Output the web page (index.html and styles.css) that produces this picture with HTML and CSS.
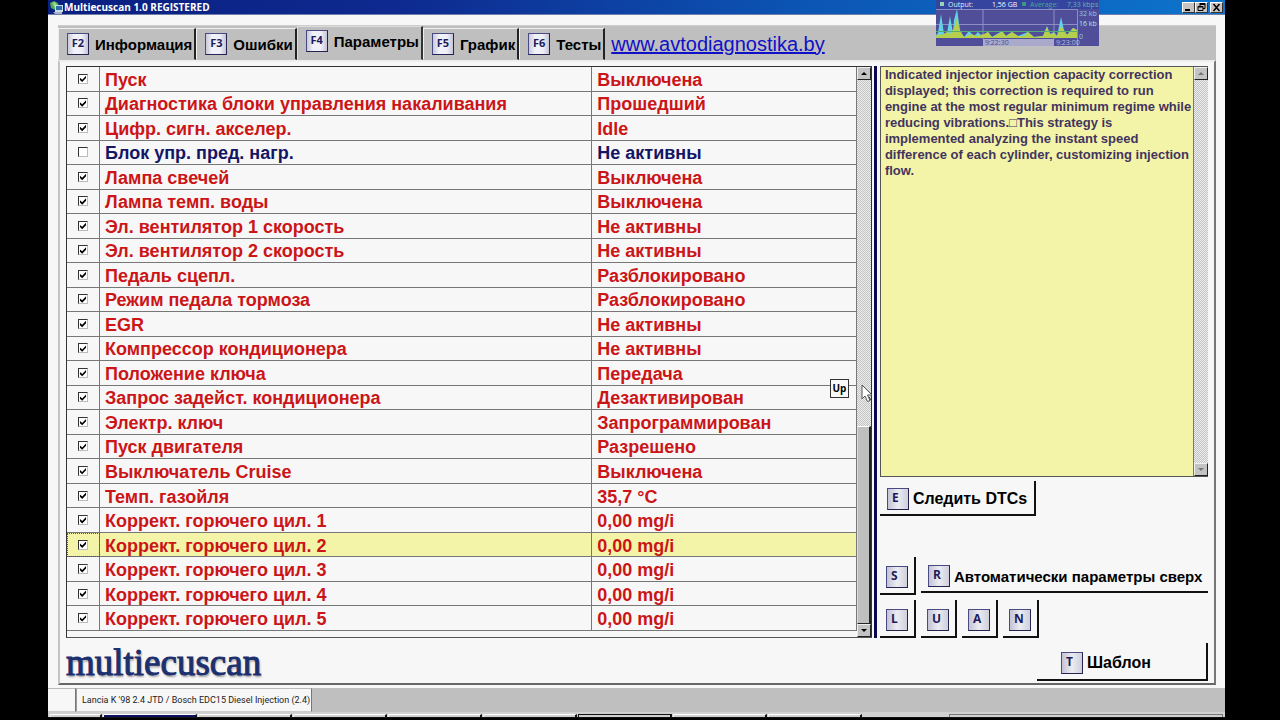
FILE: index.html
```html
<!DOCTYPE html>
<html lang="ru">
<head>
<meta charset="utf-8">
<title>Multiecuscan 1.0 REGISTERED</title>
<link rel="stylesheet" href="styles.css">
</head>
<body>
<div class="screen">
  <header class="titlebar">
    <svg class="app-icon" viewBox="0 0 13 13"><path d="M0 2l4-2 4 2 1 4-4 3-4-2z" fill="#4fa85c"/><path d="M2 2l3-1 2 3-2 3z" fill="#9bd67f"/><rect x="5" y="4" width="8" height="7" fill="#c9dbe8"/><rect x="6" y="5" width="6" height="4" fill="#2c6fae"/><path d="M3 11h9v2H5z" fill="#a8b4c4"/></svg>
    <h1 class="title">Multiecuscan 1.0 REGISTERED</h1>
    <div class="window-buttons">
      <button class="win-btn" aria-label="Minimize"><svg viewBox="0 0 11 9"><path d="M2 6h5v2H2z"/></svg></button>
      <button class="win-btn" aria-label="Restore"><svg viewBox="0 0 11 9"><path d="M4 .5h5v5H7M4 1.500h5M4 0v3M2 3.500h5v4H2zM2 4h5" fill="none" stroke="#000"/></svg></button>
      <button class="win-btn win-close" aria-label="Close"><svg viewBox="0 0 11 9"><path d="M2.500 1l6 7M8.500 1l-6 7" fill="none" stroke="#000" stroke-width="1.500"/></svg></button>
    </div>
  </header>

  <main class="workspace">
    <nav class="tabs">
      <button class="tab"><span class="key">F2</span>Информация</button>
      <button class="tab"><span class="key">F3</span>Ошибки</button>
      <button class="tab tab-active"><span class="key">F4</span>Параметры</button>
      <button class="tab"><span class="key">F5</span>График</button>
      <button class="tab"><span class="key">F6</span>Тесты</button>
      <a class="site-link" href="#">www.avtodiagnostika.by</a>
    </nav>

    <section class="panel">
      <div class="columns">
        <div class="list">
          <div class="list-body">
            <table class="params">
              <colgroup><col class="col-check"><col class="col-name"><col class="col-value"></colgroup>
              <tbody>
              <tr><td><input type="checkbox" id="p1" checked></td><td><label for="p1">Пуск</label></td><td>Выключена</td></tr>
              <tr><td><input type="checkbox" id="p2" checked></td><td><label for="p2">Диагностика блоки управления накаливания</label></td><td>Прошедший</td></tr>
              <tr><td><input type="checkbox" id="p3" checked></td><td><label for="p3">Цифр. сигн. акселер.</label></td><td>Idle</td></tr>
              <tr class="unchecked"><td><input type="checkbox" id="p4"></td><td><label for="p4">Блок упр. пред. нагр.</label></td><td>Не активны</td></tr>
              <tr><td><input type="checkbox" id="p5" checked></td><td><label for="p5">Лампа свечей</label></td><td>Выключена</td></tr>
              <tr><td><input type="checkbox" id="p6" checked></td><td><label for="p6">Лампа темп. воды</label></td><td>Выключена</td></tr>
              <tr><td><input type="checkbox" id="p7" checked></td><td><label for="p7">Эл. вентилятор 1 скорость</label></td><td>Не активны</td></tr>
              <tr><td><input type="checkbox" id="p8" checked></td><td><label for="p8">Эл. вентилятор 2 скорость</label></td><td>Не активны</td></tr>
              <tr><td><input type="checkbox" id="p9" checked></td><td><label for="p9">Педаль сцепл.</label></td><td>Разблокировано</td></tr>
              <tr><td><input type="checkbox" id="p10" checked></td><td><label for="p10">Режим педала тормоза</label></td><td>Разблокировано</td></tr>
              <tr><td><input type="checkbox" id="p11" checked></td><td><label for="p11">EGR</label></td><td>Не активны</td></tr>
              <tr><td><input type="checkbox" id="p12" checked></td><td><label for="p12">Компрессор кондиционера</label></td><td>Не активны</td></tr>
              <tr><td><input type="checkbox" id="p13" checked></td><td><label for="p13">Положение ключа</label></td><td>Передача</td></tr>
              <tr><td><input type="checkbox" id="p14" checked></td><td><label for="p14">Запрос задейст. кондиционера</label></td><td>Дезактивирован</td></tr>
              <tr><td><input type="checkbox" id="p15" checked></td><td><label for="p15">Электр. ключ</label></td><td>Запрограммирован</td></tr>
              <tr><td><input type="checkbox" id="p16" checked></td><td><label for="p16">Пуск двигателя</label></td><td>Разрешено</td></tr>
              <tr><td><input type="checkbox" id="p17" checked></td><td><label for="p17">Выключатель Cruise</label></td><td>Выключена</td></tr>
              <tr><td><input type="checkbox" id="p18" checked></td><td><label for="p18">Темп. газойля</label></td><td>35,7 °C</td></tr>
              <tr><td><input type="checkbox" id="p19" checked></td><td><label for="p19">Коррект. горючего цил. 1</label></td><td>0,00 mg/i</td></tr>
              <tr class="selected"><td><input type="checkbox" id="p20" checked></td><td><label for="p20">Коррект. горючего цил. 2</label></td><td>0,00 mg/i</td></tr>
              <tr><td><input type="checkbox" id="p21" checked></td><td><label for="p21">Коррект. горючего цил. 3</label></td><td>0,00 mg/i</td></tr>
              <tr><td><input type="checkbox" id="p22" checked></td><td><label for="p22">Коррект. горючего цил. 4</label></td><td>0,00 mg/i</td></tr>
              <tr><td><input type="checkbox" id="p23" checked></td><td><label for="p23">Коррект. горючего цил. 5</label></td><td>0,00 mg/i</td></tr>
              </tbody>
            </table>
          </div>
          <div class="scrollbar">
            <button class="arrow arrow-up" aria-label="Scroll up"></button>
            <div class="track"></div>
            <div class="thumb"></div>
            <button class="arrow arrow-down" aria-label="Scroll down"></button>
          </div>
          <div class="key-hint">Up</div>
          <svg class="pointer" viewBox="0 0 12 19"><path d="M1 1v14l3-3 2.500 5.500 2.500-1-2.500-5.500h4.500z" fill="#fff" stroke="#555"/><path d="M8 13l2 3" stroke="#333"/></svg>
        </div>

        <div class="splitter"></div>

        <aside class="side">
          <div class="info">
            <textarea class="info-text" aria-label="Description" readonly>Indicated injector injection capacity correction displayed; this correction is required to run engine at the most regular minimum regime while reducing vibrations.□This strategy is implemented analyzing the instant speed difference of each cylinder, customizing injection flow.</textarea>
            <div class="scrollbar scrollbar-off">
              <button class="arrow arrow-up" aria-label="Scroll up" disabled></button>
              <div class="track"></div>
              <button class="arrow arrow-down" aria-label="Scroll down" disabled></button>
            </div>
          </div>
          <button class="action action-dtc"><span class="key key-letter">E</span>Следить DTCs</button>
          <div class="action-row">
            <button class="action square"><span class="key key-letter">S</span></button>
            <button class="action action-auto"><span class="key key-letter">R</span>Автоматически параметры сверх</button>
          </div>
          <div class="action-row">
            <button class="action square"><span class="key key-letter">L</span></button>
            <button class="action square"><span class="key key-letter">U</span></button>
            <button class="action square"><span class="key key-letter">A</span></button>
            <button class="action square"><span class="key key-letter">N</span></button>
          </div>
        </aside>
      </div>
      <footer class="panel-footer">
        <div class="logo">multiecuscan</div>
        <button class="action action-template"><span class="key key-letter">T</span>Шаблон</button>
      </footer>
    </section>
  </main>

  <div class="statusbar">
    <div class="status-cell status-empty"></div>
    <div class="status-cell">Lancia K '98 2.4 JTD / Bosch EDC15 Diesel Injection (2.4)</div>
  </div>
  <div class="taskbar">
    <span class="task task-start"></span><span class="task task-current"></span><span class="task"></span><span class="task"></span><span class="task"></span><span class="task"></span><span class="task task-pressed"></span><span class="task"></span><span class="task"></span><span class="tray"></span>
  </div>

  <svg class="traffic" viewBox="0 0 163 46">
    <rect width="163" height="46" fill="#504d99"/>
    <rect width="163" height="9" fill="#35459f"/>
    <path d="M0 9.500h141M47 9v30M118 9v30M141.500 9v37M0 24.500h141" stroke="#8d8fc4" fill="none"/>
    <rect x="47" y="39" width="71" height="7" fill="#aaa9cb"/>
    <path d="M0 38V35L2 33L5 14L8 34L11 33L14 16L17 33L18 20L21 9L24 30L28 37L33 31L38 36L42 32L46 36L52 32L56 37L66 31L70 36L76 32L82 36L92 32L98 37L107 36L111 26L114 34L118 32L121 36L125 17L128 30L131 35L137 28L141 30V38Z" fill="#62d2e6"/>
    <path d="M0 38V36L4 34L6 35L11 32L14 34L18 28L21 18L24 31L28 37L36 34L40 36L48 34L52 32L56 37L64 33L66 31L70 36L76 32L82 36L88 36L92 32L98 37L107 36L111 27L114 34L118 33L121 36L125 26L129 32L131 35L137 28L141 30V38Z" fill="#b5d04c"/>
    <path d="M0 31.500h141" stroke="#55ad73"/>
    <rect x="4" y="2" width="4" height="4" fill="#95d5b5"/><rect x="86" y="2" width="4" height="4" fill="#3b9880"/>
    <g class="traffic-text">
      <text x="12" y="7" fill="#dfe9f5">Output:</text><text x="56" y="7" fill="#f3f5ff">1,56 GB</text>
      <text x="94" y="7" fill="#4da497">Average:</text><text x="131" y="7" fill="#67b4a8">7,33 kbps</text>
      <text x="143" y="16" fill="#8ec8e8">32 kb</text><text x="143" y="26" fill="#b2e4f3">16 kb</text><text x="143" y="39" fill="#8ec8e8">0</text>
      <text x="49" y="45" fill="#504d85">9:22:30</text><text x="120" y="45" fill="#b9b8dc">9:23:00</text>
    </g>
  </svg>
</div>
</body>
</html>
```
FILE: styles.css
```css
* { box-sizing: border-box; }

html, body { height: 100%; }

body {
  margin: 0;
  padding: 0 55px 2px 48px;
  background: #000;
  color: #000;
  font-family: "Liberation Sans", Arial, sans-serif;
}

button {
  margin: 0;
  padding: 0;
  border: 0;
  background: none;
  color: #000;
  font: inherit;
}

.screen {
  position: relative;
  display: flex;
  flex-direction: column;
  height: 100%;
  background: #f7f7f7;
}

.titlebar {
  display: flex;
  align-items: center;
  height: 15px;
  padding: 0 2px;
  background: linear-gradient(90deg, #0a1f80, #0e2a90 30%, #0c56b4 65%, #0d74cc);
  border-bottom: 1px solid #6f7fa8;
}

.app-icon { width: 13px; height: 13px; }

.title {
  flex: 1;
  margin: 0 0 0 1px;
  color: #fff;
  font: bold 10px/14px "Open Sans", sans-serif;
}

.window-buttons { display: flex; }

.win-btn {
  display: flex;
  width: 13px;
  height: 11px;
  background: #c6c3c0;
  border: 1px solid;
  border-color: #fff #333 #333 #fff;
}

.win-btn svg { width: 11px; height: 9px; }
.win-close { margin-left: 2px; }

.workspace {
  flex: 1;
  display: flex;
  flex-direction: column;
  min-height: 0;
  padding: 10px 9px 3px 10px;
}

.tabs {
  display: flex;
  align-items: flex-end;
  height: 35px;
  background: #bfbfbf;
  border-top: 1px solid #ccc;
}

.tab {
  display: flex;
  align-items: center;
  gap: 6px;
  height: 32px;
  padding: 0 2px 0 8px;
  border: 1px solid;
  border-color: #eee #222 #bfbfbf #eee;
  border-right-width: 2px;
  font-size: 15px;
  font-weight: bold;
  white-space: nowrap;
}

.tab-active {
  height: 34px;
  padding-bottom: 4px;
  border-color: #ddd #333 #bfbfbf #ddd;
}

.key {
  flex: none;
  display: block;
  width: 22px;
  height: 22px;
  border: 1px solid;
  border-color: #4b4b83 #25234f #25234f #4b4b83;
  background: linear-gradient(90deg, #c8c8da, #f2f2fa 30%, #efeff8 70%, #c4c4d6);
  color: #1d1b5c;
  font: bold 11px/18px "Open Sans", sans-serif;
  text-align: center;
}

.key-letter {
  padding-left: 4px;
  text-align: left;
  background: linear-gradient(90deg, #c3c3d6, #ececf3 50%, #cfcfdb);
}

.site-link {
  align-self: center;
  margin-left: 6px;
  padding-top: 2px;
  color: #1010c8;
  font-size: 20px;
}

.panel {
  flex: 1;
  display: flex;
  flex-direction: column;
  min-height: 0;
  padding: 4px 6px 0 6px;
  border: 2px solid;
  border-color: #fff #777 #666 #c4c4c4;
  border-top-color: #eee;
}

.columns {
  flex: 1;
  display: flex;
  min-height: 0;
}

.list {
  position: relative;
  flex: 806;
  display: flex;
  min-width: 0;
  border: 1px solid #333;
  border-bottom-color: #555;
}

.list-body { flex: 1; }

.params {
  width: 100%;
  height: calc(100% - 6px);
  border-collapse: separate;
  border-spacing: 0;
  table-layout: fixed;
  color: #cb1517;
  font-size: 18px;
  font-weight: bold;
  line-height: 20px;
}

.col-check { width: 33px; }
.col-value { width: 33.5%; }

.params td {
  padding: 2px 4px 0 5px;
  border-right: 1px solid #777;
  border-bottom: 1px solid #777;
  white-space: nowrap;
}

.params td:first-child {
  padding: 0;
  text-align: center;
}

.params .unchecked { color: #151565; }
.params .selected { background: #f4f4a8; }
.params .selected td:first-child { outline: 1px dotted #555; outline-offset: -1px; }

.params input {
  appearance: none;
  display: block;
  width: 10px;
  height: 10px;
  margin: 0 auto;
  background: #fff;
  border: 1px solid;
  border-color: #333 #bbb #bbb #333;
}

.params input:checked::before {
  content: "";
  display: block;
  width: 8px;
  height: 8px;
  background: #000;
  clip-path: polygon(12% 38%, 40% 62%, 88% 12%, 88% 42%, 40% 92%, 12% 66%);
}

.scrollbar {
  display: flex;
  flex-direction: column;
  width: 14px;
}

.track {
  flex: 347;
  background: repeating-conic-gradient(#c4c4c4 0 25%, #ececec 0 50%) 0 0 / 2px 2px;
}

.thumb {
  flex: 196;
  background: #bfbfbf;
  border: 1px solid;
  border-color: #fff #222 #222 #ddd;
  border-right-width: 2px;
}

.arrow {
  display: flex;
  align-items: center;
  justify-content: center;
  height: 13px;
  background: #c3c3c3;
  border: 1px solid;
  border-color: #eee #222 #222 #eee;
}

.arrow::before {
  content: "";
  border: 3px solid transparent;
}

.arrow-up::before { border-top: 0; border-bottom-color: #000; }
.arrow-down::before { border-bottom: 0; border-top-color: #000; }
.scrollbar-off .arrow-up::before { border-bottom-color: #777; }
.scrollbar-off .arrow-down::before { border-top-color: #777; }

.key-hint {
  position: absolute;
  right: 22px;
  top: 312px;
  width: 19px;
  height: 19px;
  background: #f8f8f8;
  border: 1px solid #333;
  font: bold 10px/17px "Open Sans", sans-serif;
  text-align: center;
}

.pointer {
  position: absolute;
  right: -2px;
  top: 317px;
  width: 12px;
  height: 19px;
}

.splitter {
  width: 3px;
  margin: 0 3px 0 2px;
  background: #09094f;
}

.side {
  flex: 329;
  display: flex;
  flex-direction: column;
  min-width: 0;
}

.info {
  flex: 1;
  display: flex;
  min-height: 0;
  border: 1px solid #555;
  border-right: 0;
}

.info-text {
  flex: 1;
  min-width: 0;
  margin: 0;
  padding: 0 0 0 4px;
  border: 0;
  border-right: 1px solid #777;
  outline: 0;
  resize: none;
  overflow: hidden;
  background: #f4f4a8;
  color: #42345f;
  font: bold 13px/16px "Liberation Sans", Arial, sans-serif;
}

.action {
  display: flex;
  align-items: center;
  gap: 4px;
  padding-top: 3px;
  border: 0 solid #111;
  border-width: 0 2px 2px 0;
  font-size: 16px;
  font-weight: bold;
  white-space: nowrap;
}

.action .key { font-size: 12px; }

.action-dtc {
  align-self: flex-start;
  height: 35px;
  margin: 4px 0 41px;
  padding-left: 7px;
  padding-right: 7px;
}

.action-row {
  display: flex;
  align-items: flex-end;
  gap: 5px;
  margin-bottom: 5px;
}

.action-row:last-child { margin-bottom: 0; }

.square {
  flex: none;
  justify-content: center;
  width: 36px;
  height: 38px;
}

.action-auto {
  flex: 1;
  min-width: 0;
  height: 35px;
  margin-bottom: 2px;
  padding-left: 7px;
  border-right: 0;
  font-size: 15px;
}

.panel-footer {
  display: flex;
  justify-content: space-between;
  height: 45px;
}

.logo {
  color: #1c2f6e;
  font: 37px/50px "Liberation Serif", serif;
  text-shadow: 1px 2px 2px #999;
  -webkit-text-stroke: 1px #1c2f6e;
}

.action-template {
  width: 171px;
  height: 38px;
  margin-top: 5px;
  padding-left: 24px;
}

.statusbar {
  display: flex;
  height: 24px;
  background: #bfbfbf;
}

.status-cell {
  padding: 0 1px 0 5px;
  background: #f7f7f7;
  border: 1px solid;
  border-color: #bbb #777 #ccc #999;
  color: #222;
  font: 9px/23px Roboto, sans-serif;
  white-space: nowrap;
}

.status-empty { width: 28px; border-left: 0; }

.taskbar {
  display: flex;
  align-items: flex-end;
  gap: 1px;
  height: 6px;
  padding: 0 2px;
  background: #d0d0d0;
  border-bottom: 1px solid #111;
}

.task {
  flex: 92;
  height: 3px;
  border: 1px solid;
  border-color: #fff #111 #bbb #eee;
  border-width: 1px 2px 0 1px;
}

.task-start { flex: 50; }
.task-current { background: #101060; }
.task-pressed { border-color: #111; }
.tray { flex: 275; height: 3px; margin-left: 86px; border: 1px solid #777; border-bottom: 0; }

.traffic {
  position: absolute;
  top: 0;
  right: 126px;
  width: 163px;
  height: 46px;
}

.traffic-text { font: 7px "Open Sans", sans-serif; }
```
